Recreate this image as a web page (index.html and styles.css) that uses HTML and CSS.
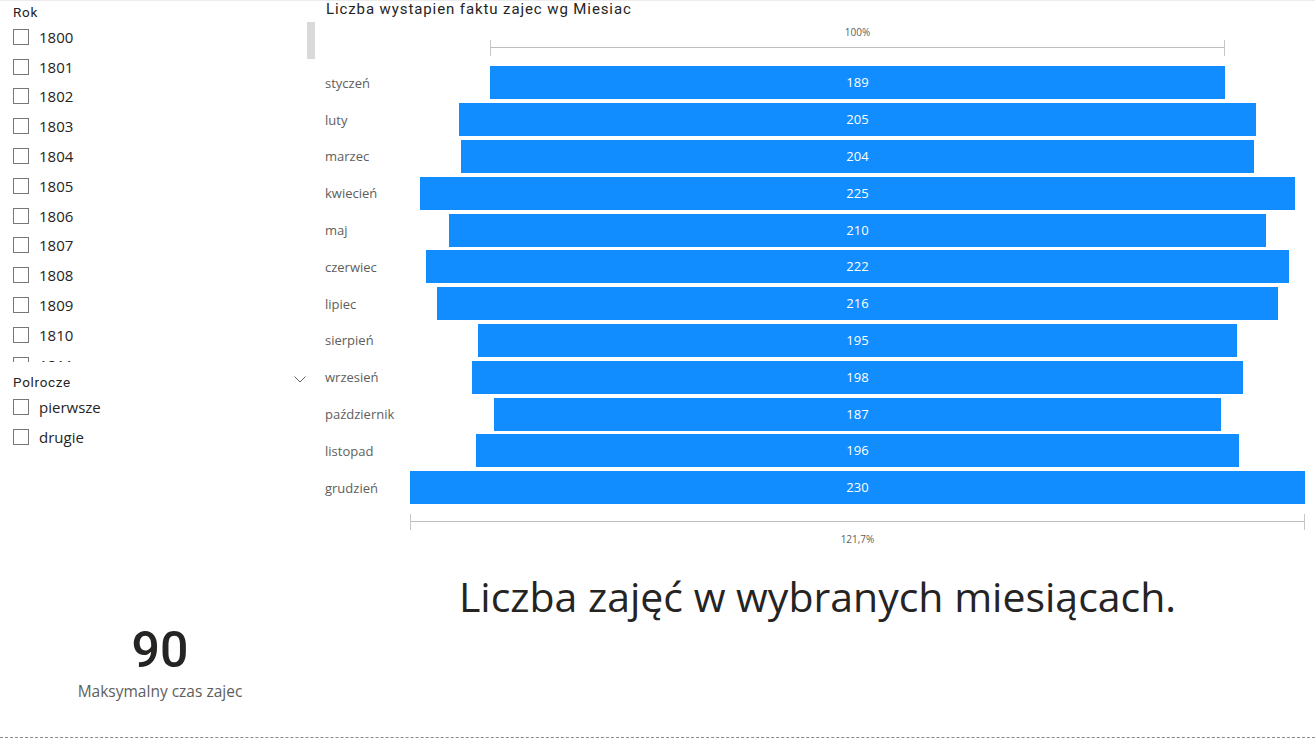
FILE: index.html
```html
<!doctype html>
<html>
<head>
<meta charset="utf-8">
<title>Raport zajęć</title>
<link rel="stylesheet" href="styles.css">
</head>
<body>
<div class="page">
	<div class="left">
		<div class="slicer">
			<div class="slicer-head">Rok</div>
			<div class="slicer-body">
				<div class="slicer-list slicer-list-rok">
					<div class="item"><span class="box"></span>1800</div>
					<div class="item"><span class="box"></span>1801</div>
					<div class="item"><span class="box"></span>1802</div>
					<div class="item"><span class="box"></span>1803</div>
					<div class="item"><span class="box"></span>1804</div>
					<div class="item"><span class="box"></span>1805</div>
					<div class="item"><span class="box"></span>1806</div>
					<div class="item"><span class="box"></span>1807</div>
					<div class="item"><span class="box"></span>1808</div>
					<div class="item"><span class="box"></span>1809</div>
					<div class="item"><span class="box"></span>1810</div>
					<div class="item"><span class="box"></span>1811</div>
					<div class="item"><span class="box"></span>1812</div>
				</div>
				<div class="scroll"><div class="thumb"></div></div>
			</div>
		</div>
		<div class="slicer slicer-pol">
			<div class="slicer-head">
				<span>Polrocze</span>
				<svg class="chev" width="12" height="7" viewBox="0 0 12 7"><polyline points="0.5,0.5 6,6 11.5,0.5" fill="none" stroke="#605e5c" stroke-width="1"/></svg>
			</div>
			<div class="slicer-list">
				<div class="item"><span class="box"></span>pierwsze</div>
				<div class="item"><span class="box"></span>drugie</div>
			</div>
		</div>
		<div class="card">
			<div class="card-value">90</div>
			<div class="card-label">Maksymalny czas zajec</div>
		</div>
	</div>
	<div class="right">
		<div class="chart">
			<div class="chart-title">Liczba wystapien faktu zajec wg Miesiac</div>
			<div class="grid">
				<div></div>
				<div class="scale-wrap">
					<div class="scale-text">100%</div>
					<div class="scale" style="width:82.17%"><div class="scale-line"></div></div>
				</div>
			</div>
			<div class="rows">
				<div class="label">styczeń</div><div class="cell"><div class="bar" style="width:82.17%">189</div></div>
				<div class="label">luty</div><div class="cell"><div class="bar" style="width:89.13%">205</div></div>
				<div class="label">marzec</div><div class="cell"><div class="bar" style="width:88.70%">204</div></div>
				<div class="label">kwiecień</div><div class="cell"><div class="bar" style="width:97.83%">225</div></div>
				<div class="label">maj</div><div class="cell"><div class="bar" style="width:91.30%">210</div></div>
				<div class="label">czerwiec</div><div class="cell"><div class="bar" style="width:96.52%">222</div></div>
				<div class="label">lipiec</div><div class="cell"><div class="bar" style="width:93.91%">216</div></div>
				<div class="label">sierpień</div><div class="cell"><div class="bar" style="width:84.78%">195</div></div>
				<div class="label">wrzesień</div><div class="cell"><div class="bar" style="width:86.09%">198</div></div>
				<div class="label">październik</div><div class="cell"><div class="bar" style="width:81.30%">187</div></div>
				<div class="label">listopad</div><div class="cell"><div class="bar" style="width:85.22%">196</div></div>
				<div class="label">grudzień</div><div class="cell"><div class="bar" style="width:100%">230</div></div>
			</div>
			<div class="grid">
				<div></div>
				<div class="scale-wrap scale-bottom">
					<div class="scale" style="width:100%"><div class="scale-line"></div></div>
					<div class="scale-text">121,7%</div>
				</div>
			</div>
		</div>
		<div class="big-text">Liczba zajęć w wybranych miesiącach.</div>
	</div>
</div>
<div class="foot"></div>
</body>
</html>
```

FILE: styles.css
```css
*{margin:0; padding:0; box-sizing:border-box;}
body{
	width: 1315px;
	height: 739px;
	overflow: hidden;
	background: #fff;
	color: #252423;
	font-family: "Open Sans", "Noto Sans", sans-serif;
	border-top: 1px solid #ececec;
}
.page{
	display: flex;
	height: 735px;
}
.left{
	width: 320px;
	display: flex;
	flex-direction: column;
}
.right{
	flex: 1;
	display: flex;
	flex-direction: column;
}

/* slicers */
.slicer{
	padding-left: 13px;
	padding-top: 1px;
}
.slicer-head{
	font-family: Roboto, "Liberation Sans", sans-serif;
	font-size: 13.5px;
	letter-spacing: 0.7px;
	line-height: 20px;
	display: flex;
	justify-content: space-between;
	align-items: center;
	padding-right: 14px;
}
.slicer-body{
	display: flex;
	height: 340px;
	overflow: hidden;
}
.slicer-list-rok{
	flex: 1;
}
.scroll{
	width: 8px;
	margin-right: 5px;
	margin-top: -1px;
}
.thumb{
	height: 38px;
	background: #d9d9d9;
}
.item{
	height: 29.8px;
	display: flex;
	align-items: center;
	font-size: 15px;
	gap: 10px;
}
.box{
	width: 16px;
	height: 16px;
	border: 1px solid #777;
	flex: none;
}
.slicer-pol{
	margin-top: 9px;
}
.chev{
	display: block;
	margin-bottom: 5px;
}

/* card */
.card{
	margin-top: auto;
	padding-bottom: 35px;
	text-align: center;
}
.card-value{
	font-family: Roboto, "Liberation Sans", sans-serif;
	font-size: 50px;
	font-weight: 500;
	line-height: 56px;
}
.card-label{
	font-size: 15.5px;
	line-height: 20px;
	color: #605e5c;
	margin-top: 3px;
}

/* funnel chart */
.chart-title{
	font-family: Roboto, "Liberation Sans", sans-serif;
	font-size: 15px;
	letter-spacing: 0.9px;
	line-height: 18px;
	padding-left: 6px;
	margin-top: -1px;
}
.grid, .rows{
	display: grid;
	grid-template-columns: 90px 895px;
}
.scale-wrap{
	display: flex;
	flex-direction: column;
	align-items: center;
	margin-top: 7px;
}
.scale-text{
	font-size: 10px;
	line-height: 14px;
	color: #605e5c;
}
.scale{
	height: 16px;
	border-left: 1px solid #c8c6c4;
	border-right: 1px solid #c8c6c4;
	margin-top: 1px;
}
.scale-line{
	height: 1px;
	background: #bdbdbd;
	margin-top: 7px;
}
.scale-bottom{
	margin-top: 8px;
}
.scale-bottom .scale{
	margin-top: 0;
	margin-bottom: 2px;
}
.rows{
	margin-top: 8.5px;
	grid-auto-rows: 36.8px;
}
.label{
	padding-left: 5px;
	font-size: 13px;
	color: #605e5c;
	display: flex;
	align-items: center;
}
.cell{
	display: flex;
	justify-content: center;
	align-items: center;
}
.bar{
	height: 33px;
	background: #118dff;
	color: #fff;
	font-size: 13px;
	line-height: 33px;
	text-align: center;
}

.big-text{
	margin-top: 24px;
	font-size: 41px;
	line-height: 52px;
	text-align: center;
}
.foot{
	border-top: 1px dashed #8a8a8a;
	margin-top: 1px;
}
```
